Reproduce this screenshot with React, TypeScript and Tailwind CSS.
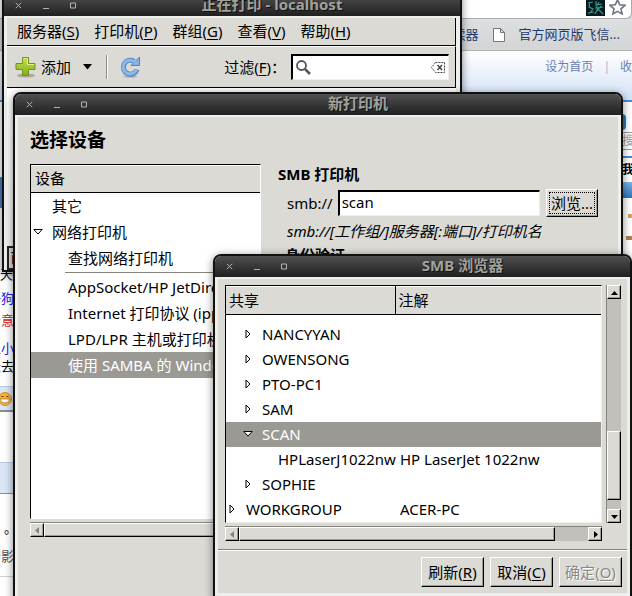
import React from "react";

const FONT = "font-['Noto_Sans','Noto_Sans_CJK_SC',sans-serif]";
const RAISED = "border border-t-white border-l-white border-b-black border-r-black bg-[#dcdad5] shadow-[inset_-1px_-1px_0_#9d9b94]";

function Key({ label, char }: { label: string; char: string }) {
  return (
    <span>
      {label}(<span className="underline underline-offset-2">{char}</span>)
    </span>
  );
}

function TitleBar({ title }: { title: string }) {
  return (
    <div className="relative flex h-[21px] shrink-0 items-center bg-linear-to-b from-[#505050] to-[#202020]">
      <div className="flex items-center gap-[17px] pb-px pl-[11px] text-[#b4b2ab]">
        <button type="button" aria-label="关闭" className="block">
          <svg width="7" height="7" viewBox="0 0 7 7" stroke="currentColor" fill="none">
            <path d="M.8.8l5.4 5.4M6.2.8L.8 6.2" />
          </svg>
        </button>
        <button type="button" aria-label="最小化" className="block pl-1">
          <svg width="6" height="7" viewBox="0 0 6 7" stroke="currentColor" fill="none">
            <path d="M0 6.5h6" />
          </svg>
        </button>
        <button type="button" aria-label="最大化" className="block pl-1">
          <svg width="6" height="7" viewBox="0 0 6 7" stroke="currentColor" fill="none">
            <path d="M.5 1h5v5h-5z" />
          </svg>
        </button>
      </div>
      <h1 className="absolute top-0 right-0 left-20 text-center text-[15px] leading-[18px] font-bold text-[#a3a19a] [text-shadow:1px_1px_0_#111]">
        {title}
      </h1>
    </div>
  );
}

function Expander({ open = false, selected = false }: { open?: boolean; selected?: boolean }) {
  return (
    <svg width="10" height="10" viewBox="0 0 10 10" fill={selected ? "#fff" : "none"} stroke="#000" className="shrink-0">
      {open ? <path d="M.8 2.5h8.4L5 7z" /> : <path d="M3 1v8l4-4z" />}
    </svg>
  );
}

function Arrow({ dir, disabled = false }: { dir: "up" | "down" | "left" | "right"; disabled?: boolean }) {
  const paths = {
    up: "M0 6h7L3.500 2z",
    down: "M0 2h7L3.500 6z",
    left: "M5 0v7L1 3.500z",
    right: "M2 0v7l4-3.500z",
  };
  return (
    <button
      type="button"
      aria-label={dir}
      disabled={disabled}
      className={`flex size-[14px] shrink-0 items-center justify-center ${RAISED}`}
    >
      <svg width="7" height="7" viewBox="0 0 7 7" fill={disabled ? "#85837c" : "#000"}>
        <path d={paths[dir]} />
      </svg>
    </button>
  );
}

const menus = [
  ["服务器", "S"],
  ["打印机", "P"],
  ["群组", "G"],
  ["查看", "V"],
  ["帮助", "H"],
];

function PrintersWindow() {
  return (
    <section className="absolute top-[-7px] right-[170px] left-[2px] flex h-[279px] flex-col border-2 border-[#111] bg-[#eeeeec] shadow-[0_2px_8px_rgba(0,0,0,0.5)]">
      <TitleBar title="正在打印 - localhost" />
      <div className="mt-0.5 mr-1 ml-[3px] flex min-h-0 flex-1 flex-col">
        <nav className="flex h-7 shrink-0 items-center gap-[15px] border-r border-b border-black bg-[#dcdad5] pl-2.5 text-[15px]">
          {menus.map(([label, char]) => (
            <button key={char} type="button">
              <Key label={label} char={char} />
            </button>
          ))}
        </nav>
        <div className="flex h-[42px] shrink-0 items-center border-t border-r border-b border-t-white border-r-black border-b-black bg-[#dcdad5] pr-1.5 pl-2 text-[15px]">
          <button type="button" className="flex items-center gap-1">
            <svg width="22" height="22" viewBox="0 0 22 22">
              <defs>
                <linearGradient id="plus" x2="0" y2="1">
                  <stop stopColor="#c6e04c" />
                  <stop offset="1" stopColor="#84ad1c" />
                </linearGradient>
              </defs>
              <ellipse cx="11" cy="19.500" rx="9" ry="2" fill="#aaa89f" />
              <path d="M7.500 1.500h6v6h6.500v6h-6.500v6h-6v-6H1v-6h6.500z" fill="url(#plus)" stroke="#6f9416" />
              <path d="M8.500 2.500h4v6h6.500" fill="none" stroke="#e0f08a" />
            </svg>
            添加
          </button>
          <button type="button" aria-label="更多" className="ml-3">
            <svg width="9" height="6" viewBox="0 0 9 6">
              <path d="M0 0h9L4.500 5.500z" />
            </svg>
          </button>
          <div className="ml-[14px] h-6 w-0.5 border-r border-l border-r-white border-l-[#8e8c85]" />
          <button type="button" aria-label="刷新" className="ml-[11px]">
            <svg width="22" height="22" viewBox="0 0 22 22" fill="none">
              <ellipse cx="11" cy="20.500" rx="7" ry="1.300" fill="#b7b5ae" />
              <path d="M18 13.500A7 7 0 1 1 15 5.200" stroke="#4f83c2" strokeWidth="5" />
              <path d="M20.500 1v8.500h-8.500l3-3z" fill="#86b3e4" stroke="#4f83c2" />
              <path d="M17.500 13.600A6.900 6.900 0 1 1 16 6.200" stroke="#8cb8e8" strokeWidth="3.200" />
            </svg>
          </button>
          <label htmlFor="filter" className="ml-auto pr-[5px]">
            <Key label="过滤" char="F" />：
          </label>
          <div className="flex h-[26px] w-[158px] shrink-0 items-center border-t-2 border-r border-b border-l-2 border-t-black border-r-[#eeeeec] border-b-[#eeeeec] border-l-black bg-white px-[3px]">
            <svg width="15" height="15" viewBox="0 0 15 15" fill="none" stroke="#555" className="shrink-0">
              <circle cx="5.500" cy="5.500" r="4.500" strokeWidth="1.800" />
              <path d="M8.800 8.800L14 14" strokeWidth="2.600" />
            </svg>
            <input id="filter" className="min-w-0 flex-1 outline-none" />
            <button type="button" aria-label="清除">
              <svg width="14" height="11" viewBox="0 0 14 11" fill="none" stroke="#444">
                <path d="M4.500.5h9v10h-9l-4-5z" strokeDasharray="2 1" />
                <path d="M6.500 3l4.500 5M11 3L6.500 8" strokeWidth="1.500" />
              </svg>
            </button>
          </div>
        </div>
        <div className="flex flex-1 items-end bg-linear-to-b from-white to-[#eeeeec]">
          <div className="h-6 w-10 overflow-hidden border-2 border-[#222] bg-[#dcdad5] pl-px text-[15px] leading-5">已连接</div>
        </div>
      </div>
    </section>
  );
}

const protocols = ["AppSocket/HP JetDirect", "Internet 打印协议 (ipp)", "LPD/LPR 主机或打印机"];

function NewPrinterWindow() {
  return (
    <section className="absolute top-[92px] right-[9px] bottom-[-20px] left-[13px] flex flex-col overflow-hidden rounded-t-lg border-2 border-[#111] bg-[#eeeeec] shadow-[0_2px_8px_rgba(0,0,0,0.5)]">
      <TitleBar title="新打印机" />
      <div className="mt-0.5 mr-[3px] ml-[3px] flex flex-1 flex-col bg-[#dcdad5] pt-[9px] pl-3 text-[15px]">
        <h2 className="text-[19px] leading-7 font-bold">选择设备</h2>
        <div className="mt-2.5 flex gap-[17px]">
          <div className="w-[231px] shrink-0">
            <div className="flex h-[355px] flex-col border border-t-black border-r-white border-b-white border-l-black bg-white">
              <div className="flex h-7 shrink-0 items-center border-t border-b border-t-white border-b-black bg-[#dcdad5] pb-px pl-1">设备</div>
              <ul className="leading-[26px]">
                <li className="pl-[21px]">其它</li>
                <li className="flex items-center gap-[9px] pl-0.5">
                  <Expander open />
                  网络打印机
                </li>
                <li className="pl-[37px]">查找网络打印机</li>
                <li className="my-px ml-[34px] h-px bg-[#85837c]" />
                {protocols.map((name) => (
                  <li key={name} className="truncate pl-[37px] text-clip">
                    {name}
                  </li>
                ))}
                <li className="overflow-hidden bg-[#9b9993] pl-[37px] whitespace-nowrap text-white">使用 SAMBA 的 Windows 打印机</li>
              </ul>
            </div>
            <div className="mt-[3px] flex border-t border-[#85837c] bg-[#c2c0ba]">
              <Arrow dir="left" disabled />
              <div className={`h-[14px] flex-1 ${RAISED}`} />
            </div>
          </div>
          <div className="min-w-0 flex-1 pr-5">
            <h3 className="leading-5 font-bold">SMB 打印机</h3>
            <div className="mt-[5px] flex items-center pl-[9px]">
              <label htmlFor="uri">smb://</label>
              <input
                id="uri"
                defaultValue="scan"
                className="ml-[5px] h-[26px] min-w-0 flex-1 border-t-2 border-r border-b border-l-2 border-t-black border-r-[#eeeeec] border-b-[#eeeeec] border-l-black bg-white px-0.5 pb-1 outline-none"
              />
              <button type="button" className={`ml-[6px] h-7 w-[52px] p-0.5 ${RAISED}`}>
                <span className="flex h-full items-center justify-center border border-dotted border-black">浏览...</span>
              </button>
            </div>
            <p className="mt-0.5 pl-[9px] leading-6 whitespace-nowrap italic">smb://[工作组/]服务器[:端口]/打印机名</p>
            <h3 className="pl-[7px] leading-6 font-bold">身份验证</h3>
          </div>
        </div>
      </div>
    </section>
  );
}

const hosts = [
  { name: "NANCYYAN" },
  { name: "OWENSONG" },
  { name: "PTO-PC1" },
  { name: "SAM" },
  { name: "SCAN", open: true },
  { name: "HPLaserJ1022nw", comment: "HP LaserJet 1022nw", leaf: true },
  { name: "SOPHIE" },
  { name: "WORKGROUP", comment: "ACER-PC", root: true },
];

function BrowserWindow() {
  return (
    <section className="absolute top-[254px] right-0 left-[213px] flex h-[344px] flex-col overflow-hidden rounded-t-lg border-2 border-[#111] bg-[#eeeeec] shadow-[0_2px_8px_rgba(0,0,0,0.5)]">
      <TitleBar title="SMB 浏览器" />
      <div className="mx-[3px] mt-0.5 flex flex-col bg-[#dcdad5] pt-[6px] text-[15px]">
        <div className="flex gap-1 pr-1.5 pl-[7px]">
          <div className="min-w-0 flex-1">
            <div className="h-[238px] overflow-hidden border border-t-black border-r-[#eeeeec] border-b-[#eeeeec] border-l-black bg-white">
              <table className="w-full table-fixed border-collapse text-left">
                <thead>
                  <tr className="h-7 border-b border-black bg-[#dcdad5]">
                    <th className="w-[169px] border-t border-r border-t-white border-r-black pb-px pl-[3px] font-normal">共享</th>
                    <th className="border-t border-t-white pb-px pl-[3px] font-normal">注解</th>
                  </tr>
                </thead>
                <tbody>
                  <tr className="h-[7px]" />
                  {hosts.map((host) => (
                    <tr key={host.name} className={host.open ? "h-[25px] bg-[#9b9993] text-white" : "h-[25px]"}>
                      <td className={host.root ? "pl-px" : host.leaf ? "pl-[52px]" : "pl-[17px]"}>
                        <span className="flex items-center gap-[9px] leading-[25px]">
                          {!host.leaf && <Expander open={host.open} selected={host.open} />}
                          {host.name}
                        </span>
                      </td>
                      <td className="pl-[5px] leading-[25px]">{host.comment}</td>
                    </tr>
                  ))}
                </tbody>
              </table>
            </div>
            <div className="mt-[3px] flex border-t border-[#85837c] bg-[#c2c0ba]">
              <Arrow dir="left" disabled />
              <div className={`h-[14px] flex-1 ${RAISED}`} />
              <div className="w-[33px]" />
              <Arrow dir="right" />
            </div>
          </div>
          <div className="flex h-[238px] flex-col border-l border-[#85837c] bg-[#c2c0ba]">
            <Arrow dir="up" />
            <div className="flex-1" />
            <div className={`h-[69px] w-[14px] ${RAISED}`} />
            <div className="h-[9px]" />
            <Arrow dir="down" />
          </div>
        </div>
        <div className="mt-2 h-0.5 border-t border-b border-t-[#85837c] border-b-white" />
        <div className="flex justify-end gap-1.5 px-[5px] pt-1.5 pb-1.5">
          <button type="button" className={`h-[30px] w-[63px] ${RAISED}`}>
            <Key label="刷新" char="R" />
          </button>
          <button type="button" className={`h-[30px] w-[63px] ${RAISED}`}>
            <Key label="取消" char="C" />
          </button>
          <button type="button" disabled className={`h-[30px] w-[63px] text-[#8a8881] [text-shadow:1px_1px_0_#fff] ${RAISED}`}>
            <Key label="确定" char="O" />
          </button>
        </div>
      </div>
    </section>
  );
}

function WebPage() {
  return (
    <div className="text-[13px] text-[#1f3a6e]">
      <div className="flex h-[19px] justify-end bg-[#d6d8dc]">
        <div className="flex w-full items-start justify-end gap-1 rounded-br-md border-r border-b border-[#a9abb0] bg-white pr-[5px]">
          <svg width="19" height="16" viewBox="0 0 19 16" fill="none">
            <path d="M0 0h19v16H0z" fill="#0a1a1c" />
            <path d="M2 3l5-1M4 2l-1 5 4 2-4 5M2 13l6-1M10 1v4l6-1M13 2l-3 6 7-1M12 8l-3 6M12 9l5 5M15 6l-4 5" stroke="#2f9c8c" strokeWidth="1.200" />
          </svg>
          <svg width="17" height="16" viewBox="0 1 17 16" fill="none" stroke="#6d7382" strokeWidth="1.600">
            <path d="M8.500 1l2.200 4.700 5.200.6-3.900 3.500 1.100 5.100-4.600-2.600-4.600 2.600L5 9.800 1.100 6.300l5.200-.6z" />
          </svg>
        </div>
      </div>
      <div className="flex h-8 items-center justify-end border-b border-[#b0b2b6] bg-linear-to-b from-[#dedfe1] to-[#d3d4d6] pr-3">
        <a href="#reader">阅读器</a>
        <svg width="12" height="14" viewBox="0 0 12 14" fill="#fff" stroke="#777" className="ml-[14px]">
          <path d="M.5.5h7l4 4v9H.5zM7.500.5v4h4" />
        </svg>
        <a href="#fetion" className="ml-[14px]">
          官方网页版飞信...
        </a>
      </div>
      <div className="flex h-[51px] items-start justify-end gap-[10px] border-b-2 border-[#4a8ad0] bg-linear-to-b from-white to-[#d3e2f6] pt-2 text-xs text-[#6a80b0]">
        <a href="#home">设为首页</a>
        <span className="text-[#aab4c8]">|</span>
        <a href="#fav" className="w-3 overflow-hidden whitespace-nowrap">
          收藏
        </a>
      </div>
    </div>
  );
}

function PageEdges() {
  return (
    <div className="flex justify-between overflow-hidden text-[13px] whitespace-nowrap">
      <div className="w-[14px] overflow-hidden">
        <div className="h-[75px]" />
        <div className="h-[31px] bg-[#4a80c0]" />
        <div className="h-[52px]" />
        <p className="h-7 leading-7">天去</p>
        <p className="h-5 text-right leading-5 text-[#2020e0] [direction:rtl]">一狗</p>
        <p className="h-7 leading-6 text-[#e02020] [direction:rtl]">今意</p>
        <p className="h-5 leading-6 text-[#2020e0] [direction:rtl]">上小</p>
        <p className="h-[30px] leading-5 [direction:rtl]">天去</p>
        <div className="flex h-[26px] items-center border-t border-b-2 border-t-[#b5c7e2] border-b-[#8a8c94] bg-[#d8e6f6]">
          <svg width="13" height="14" viewBox="0 0 13 14">
            <circle cx="5" cy="7" r="6.500" fill="#f3b43a" stroke="#d18a20" />
            <path d="M0 7h10q-1 4-5 4T0 7z" fill="#fff" stroke="#9a5c10" strokeWidth=".6" />
            <path d="M1.500 4.500h2M6.500 4.500h2" stroke="#5c3408" />
          </svg>
        </div>
        <div className="h-[50px]" />
        <div className="h-8 border-t border-b border-t-[#b8cbe8] border-b-[#6a94cc] bg-[#dbe7f7]" />
        <p className="mt-6 h-5 pl-1 leading-5">。</p>
        <p className="mt-2 h-5 leading-5 text-[#555] [direction:rtl]">即影</p>
        <div className="mt-[10px] h-px bg-[#d0d0d0]" />
      </div>
      <div className="w-[10px] overflow-hidden">
        <div className="mt-3 h-4 w-1 rounded-r-full bg-[#2a7ab8]" />
        <p className="mt-0.5 h-[18px] border-t border-b border-[#999] text-xs leading-4 text-[#999]">搜索</p>
        <p className="mt-1.5 h-6 border-t-2 border-[#4a8ad0] text-xs leading-6 font-bold">我的</p>
        <div className="mt-0.5 h-4 bg-linear-to-b from-[#79b4e8] to-[#2873be]" />
        <div className="mt-4 ml-[6px] h-1 w-1 bg-[#d8a060]" />
        <div className="mt-[18px] ml-1 h-1 w-2 bg-[#b08050]" />
      </div>
    </div>
  );
}

export default function App() {
  return (
    <main className={`relative h-screen overflow-hidden bg-white text-black ${FONT}`}>
      <WebPage />
      <PageEdges />
      <PrintersWindow />
      <NewPrinterWindow />
      <BrowserWindow />
    </main>
  );
}
